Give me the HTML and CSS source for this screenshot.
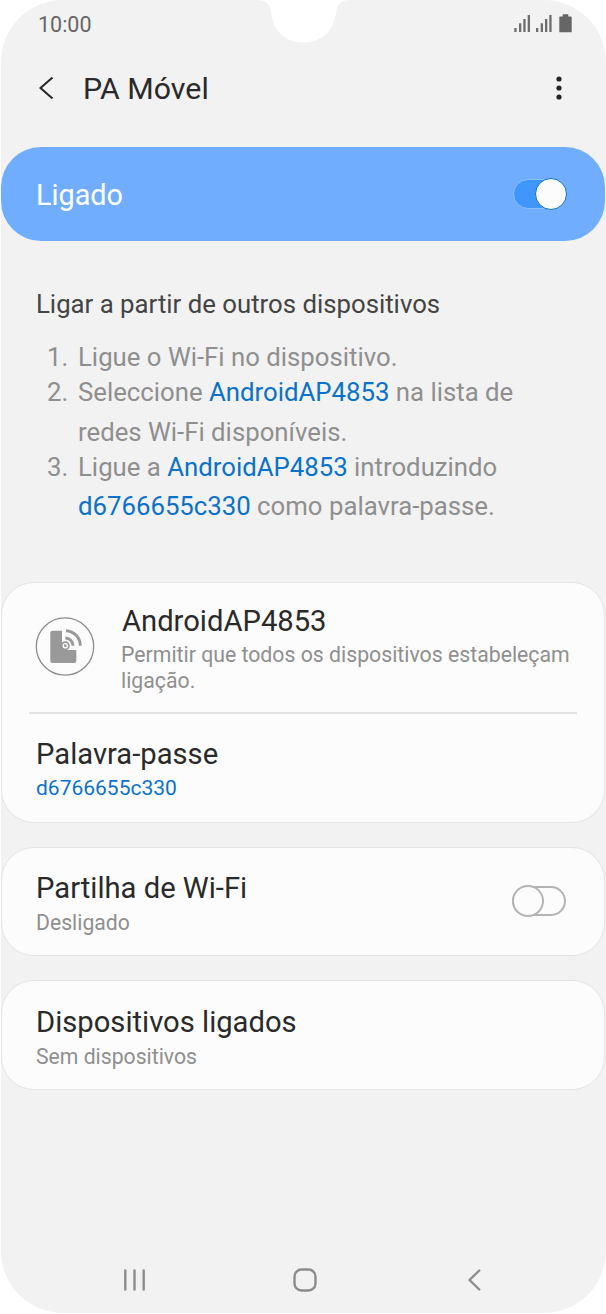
FILE: index.html
```html
<!DOCTYPE html>
<html lang="pt">
<head>
<meta charset="utf-8">
<title>PA Móvel</title>
<link rel="stylesheet" href="styles.css">
</head>
<body>
<div class="phone">
  <svg class="notch" width="93" height="43" viewBox="0 0 93 43"><path d="M0 0C8 0 12 3 13.500 10C15 17 15 22 20 30C26 38 36 42.500 46.500 42.500C57 42.500 67 38 73 30C78 22 78 17 79.500 10C81 3 85 0 93 0Z" fill="#fff"/></svg>
  <div class="status">
    <span class="time">10:00</span>
    <svg class="status-icons" width="58" height="19" viewBox="0 0 58 19">
      <g fill="#6e6e6e">
        <rect x="0.300" y="14" width="2.300" height="4"/><rect x="5" y="9.300" width="2.300" height="8.700"/><rect x="9.300" y="5" width="2.300" height="13"/><rect x="13.700" y="1" width="2.300" height="17"/>
        <rect x="22" y="14" width="2.300" height="4"/><rect x="26.700" y="9.300" width="2.300" height="8.700"/><rect x="31" y="5" width="2.300" height="13"/><rect x="35.300" y="1" width="2.300" height="17"/>
      </g>
      <path d="M45.300 3.500a1 1 0 0 1 1-1h2.400V.3h5.600v2.200h2.400a1 1 0 0 1 1 1v14.800H45.300Z" fill="#666"/>
    </svg>
  </div>
  <header class="appbar">
    <svg class="back" width="17" height="24" viewBox="0 0 17 24"><path d="M15.500 1.500 3.500 12 15.500 22.500" fill="none" stroke="#252525" stroke-width="2"/></svg>
    <h1 class="title">PA Móvel</h1>
    <svg class="more" width="8" height="26" viewBox="0 0 8 26"><circle cx="4" cy="4" r="2.600"/><circle cx="4" cy="13" r="2.600"/><circle cx="4" cy="22" r="2.600"/></svg>
  </header>
  <section class="master">
    <span class="master-label">Ligado</span>
    <span class="switch switch-on"><span class="knob"></span></span>
  </section>
  <section class="help">
    <h2 class="help-title">Ligar a partir de outros dispositivos</h2>
    <ol class="steps">
      <li>Ligue o Wi-Fi no dispositivo.</li>
      <li>Seleccione <a>AndroidAP4853</a> na lista de redes Wi-Fi disponíveis.</li>
      <li>Ligue a <a>AndroidAP4853</a> introduzindo <a>d6766655c330</a> como palavra-passe.</li>
    </ol>
  </section>
  <section class="card card-ap">
    <div class="ap-row">
      <svg class="ap-icon" width="60" height="60" viewBox="0 0 60 60">
        <circle cx="30" cy="29.500" r="28.700" fill="none" stroke="#8c8c8c" stroke-width="1.300"/>
        <path d="M15.300 15.700a2 2 0 0 1 2-2H27V27Q27 33 33 33H41.300V44a2 2 0 0 1-2 2H17.300a2 2 0 0 1-2-2Z" fill="#999"/>
        <circle cx="30.300" cy="28.700" r="4.500" fill="#999"/>
        <circle cx="30.300" cy="28.700" r="2.100" fill="none" stroke="#fcfcfc" stroke-width="1.400"/>
        <path d="M30.300 21A7.700 7.700 0 0 1 38 28.700M31 13.700A15 15 0 0 1 45.300 28.700" fill="none" stroke="#999" stroke-width="3"/>
      </svg>
      <div class="ap-text">
        <div class="row-title">AndroidAP4853</div>
        <div class="row-desc">Permitir que todos os dispositivos estabeleçam ligação.</div>
      </div>
    </div>
    <div class="divider"></div>
    <div class="row-password">
      <div class="row-title">Palavra-passe</div>
      <div class="row-value">d6766655c330</div>
    </div>
  </section>
  <section class="card card-row">
    <div>
      <div class="row-title">Partilha de Wi-Fi</div>
      <div class="row-sub">Desligado</div>
    </div>
    <span class="switch switch-off"><span class="knob"></span></span>
  </section>
  <section class="card card-row">
    <div>
      <div class="row-title">Dispositivos ligados</div>
      <div class="row-sub">Sem dispositivos</div>
    </div>
  </section>
  <nav class="navbar">
    <svg width="21" height="24" viewBox="0 0 21 24"><path d="M1.300 2.500v19M10.500 2.500v19M19.700 2.500v19" stroke="#8c8c8c" stroke-width="2.400" stroke-linecap="round" fill="none"/></svg>
    <svg class="nav-home" width="24" height="24" viewBox="0 0 24 24"><rect x="1.500" y="1.500" width="21" height="21" rx="7" fill="none" stroke="#8c8c8c" stroke-width="2.400"/></svg>
    <svg width="13" height="24" viewBox="0 0 13 24"><path d="M11.300 2.500 1.500 12 11.300 21.500" stroke="#8c8c8c" stroke-width="2.400" stroke-linecap="round" stroke-linejoin="round" fill="none"/></svg>
  </nav>
</div>
</body>
</html>
```
FILE: styles.css
```css
* { box-sizing: border-box; }
html, body { margin: 0; padding: 0; background: #fff; }
body { font-family: Roboto, "Liberation Sans", sans-serif; width: 606px; height: 1314px; overflow: hidden; }
.phone {
  position: relative;
  width: 605px;
  height: 1313px;
  margin-left: 1px;
  background: #f2f2f2;
  border-radius: 62px;
  display: flex;
  flex-direction: column;
  overflow: hidden;
}
.notch { position: absolute; left: 256px; top: 0; }
.status { flex: none; height: 48px; padding: 13px 34px 0 37px; display: flex; justify-content: space-between; align-items: flex-start; }
.time { font-size: 21.500px; line-height: 24px; color: #666; }
.status-icons { display: block; margin-top: 1px; }
.appbar { flex: none; height: 80px; display: flex; align-items: center; padding: 0 43.400px 0 36px; }
.back { flex: none; margin-right: 29px; }
.title { flex: 1; margin: 0; font-size: 30.300px; font-weight: 400; color: #2a2a2a; }
.more { flex: none; fill: #252525; }
.master {
  flex: none;
  margin: 19px 1px 0 0;
  height: 94px;
  background: #70adff;
  border-radius: 40px;
  padding: 0 39px 0 35px;
  display: flex;
  align-items: center;
  justify-content: space-between;
  color: #fff;
  font-size: 28.800px;
}
.master-label { margin-top: 2px; }
.switch { position: relative; display: block; flex: none; height: 30px; border-radius: 15px; }
.switch-on { width: 53px; background: #3f97fd; border: 1.500px solid #8cc0ff; }
.switch-off { width: 54px; margin-top: 15px; border: 2px solid #b3b3b3; background: #fcfcfc; }
.knob { position: absolute; width: 32px; height: 32px; border-radius: 50%; background: #fcfcfc; }
.switch-on .knob { top: -2.500px; right: -1.500px; border: 1.500px solid #0f72c4; }
.switch-off .knob { top: -3px; left: -2px; border: 2px solid #b3b3b3; }
.help { flex: none; padding: 46px 31px 0 35px; }
.help-title { margin: 0; font-size: 25.750px; line-height: 34px; font-weight: 400; color: #444; }
.steps { margin: 17px 0 0; padding: 0 0 0 42px; list-style: none; counter-reset: step; font-size: 25.750px; line-height: 39.500px; color: #8f8f8f; }
.steps li { counter-increment: step; }
.steps li + li { margin-top: -4.500px; }
.steps li::before { content: counter(step) "."; display: inline-block; width: 31px; margin-left: -31px; }
.steps a { color: #0a72c8; }
.card { flex: none; background: #fcfcfc; border: 1px solid #e4e4e4; border-radius: 33px; margin-right: 1px; }
.card-ap { margin-top: 55px; height: 241px; }
.ap-row { display: flex; padding: 21px 28px 0 33px; height: 129.500px; }
.ap-icon { flex: none; margin: 13px 27px 0 0; }
.row-title { font-size: 29.200px; line-height: 34px; color: #2a2a2a; }
.row-desc { margin: 4px 0 0 -1px; font-size: 21.250px; line-height: 26px; color: #8f8f8f; }
.divider { height: 2px; margin: 0 27px; background: #e3e3e3; }
.row-password { padding: 22.500px 34px 0; }
.row-value { margin-top: 4.500px; font-size: 21px; line-height: 26px; color: #0a72c8; }
.row-sub { margin-top: 5px; font-size: 21.200px; line-height: 26px; color: #8f8f8f; }
.card-row { margin-top: 24px; height: 109.500px; padding: 23px 38.300px 0 34px; display: flex; align-items: flex-start; justify-content: space-between; }
.card-row + .card-row { padding-top: 24px; }
.navbar { flex: none; margin-top: auto; padding: 0 0 21px 123px; display: flex; align-items: center; }
.nav-home { margin: 0 151.500px 0 147.500px; }
```
